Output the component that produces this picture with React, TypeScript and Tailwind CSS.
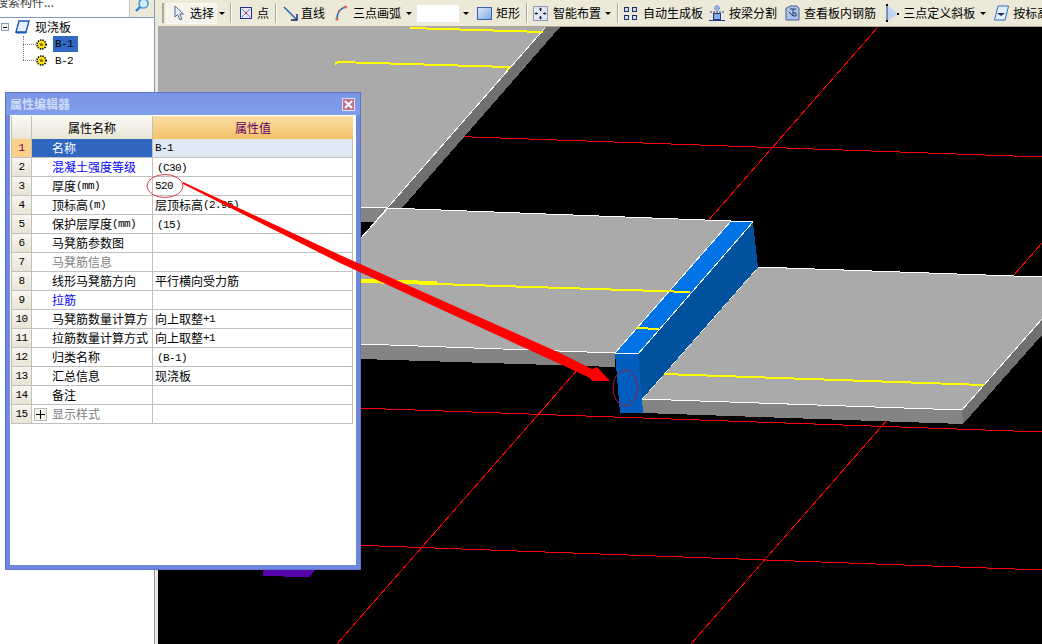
import type { ReactNode } from 'react';

const cjk = 'font-["Noto_Sans_CJK_SC","Liberation_Sans",sans-serif]';

// latin text in the old bitmap font is 6px per char
function L({ children }: { children: ReactNode }) {
  return <span className='font-["Liberation_Mono",monospace] text-[11px] tracking-[-0.6px]'>{children}</span>;
}

function Sep() {
  return <div className="w-[2px] h-[20px] bg-[#aca899] border-r border-white shrink-0" />;
}

function Caret() {
  return <div className="w-0 h-0 border-x-[3px] border-x-transparent border-t-[3px] border-t-black shrink-0" />;
}

function Tool({ icon, label, className }: { icon: ReactNode; label: string; className: string }) {
  return (
    <div className={`flex items-center shrink-0 ${className}`}>
      {icon}
      <span className="whitespace-nowrap">{label}</span>
    </div>
  );
}

function SelectIcon() {
  return (
    <svg width="10" height="16" viewBox="0 0 10 16" className="mr-[6px]">
      <path d="M1 1 V12 L3.5 9.5 L6 15 L8 14 L5.8 9 H9.5 Z" fill="#e6ecf8" stroke="#56688f" />
    </svg>
  );
}

function PointIcon() {
  return (
    <svg width="12" height="12" viewBox="0 0 12 12" className="mr-[5px]">
      <rect x="0.5" y="0.5" width="11" height="11" fill="#e4e8f6" stroke="#23308a" />
      <path d="M2 2 L10 10 M10 2 L2 10" stroke="#6878b8" />
      <rect x="5" y="5" width="2" height="2" fill="#e02828" />
    </svg>
  );
}

function LineIcon() {
  return (
    <svg width="15" height="15" viewBox="0 0 15 15" className="mr-[3px]">
      <path d="M1 1 L13 13" stroke="#1f5fb0" strokeWidth="1.4" />
      <path d="M8 14 H14 V8" stroke="#102060" strokeWidth="1.4" fill="none" />
    </svg>
  );
}

function ArcIcon() {
  return (
    <svg width="14" height="16" viewBox="0 0 14 16" className="mr-[5px]">
      <path d="M3 14 Q3 5 11 2" stroke="#2b6fc0" strokeWidth="1.6" fill="none" />
      <circle cx="3" cy="14" r="1.6" fill="#e0633a" />
      <circle cx="11.5" cy="2" r="1.6" fill="#e0633a" />
      <circle cx="5" cy="6" r="1.2" fill="#e0633a" />
    </svg>
  );
}

function RectIcon() {
  return (
    <svg width="15" height="13" viewBox="0 0 15 13" className="mr-[4px]">
      <defs>
        <linearGradient id="rectFill" x1="0" y1="0" x2="1" y2="1">
          <stop offset="0" stopColor="#dce9fa" />
          <stop offset="1" stopColor="#7ea8e4" />
        </linearGradient>
      </defs>
      <rect x="0.5" y="0.5" width="14" height="12" fill="url(#rectFill)" stroke="#3c62b4" />
    </svg>
  );
}

function SmartIcon() {
  return (
    <svg width="15" height="15" viewBox="0 0 15 15" className="mr-[5px]">
      <rect x="0.5" y="0.5" width="14" height="14" fill="#dfe6f4" stroke="#3a4a78" strokeDasharray="1 1" />
      <path d="M7.5 2 V5 M7.5 10 V13 M2 7.5 H5 M10 7.5 H13" stroke="#101828" strokeWidth="1.2" />
      <path d="M6 3.5 L7.5 1.5 L9 3.5 Z M6 11.5 L7.5 13.5 L9 11.5 Z M3.5 6 L1.5 7.5 L3.5 9 Z M11.5 6 L13.5 7.5 L11.5 9 Z" fill="#101828" />
    </svg>
  );
}

function AutoIcon() {
  return (
    <svg width="13" height="15" viewBox="0 0 13 15" className="mr-[6px]">
      {[0, 8].map((x) =>
        [1, 9].map((y) => (
          <rect key={`${x}-${y}`} x={x + 0.5} y={y + 0.5} width="4" height="4" fill="#cfe0f6" stroke="#1f2f70" />
        )),
      )}
    </svg>
  );
}

function SplitIcon() {
  return (
    <svg width="16" height="16" viewBox="0 0 16 16" className="mr-[4px]">
      <circle cx="8" cy="3" r="2.4" fill="#8fb8ee" stroke="#3c68c0" strokeDasharray="1 1" />
      <path d="M1 7 H15" stroke="#26368a" strokeDasharray="2 1" />
      <rect x="4.5" y="8.5" width="7" height="6" fill="#7fb0ec" stroke="#26368a" />
      <path d="M0 15.5 H16" stroke="#26368a" />
    </svg>
  );
}

function ViewIcon() {
  return (
    <svg width="15" height="16" viewBox="0 0 15 16" className="mr-[4px]">
      <path d="M2 3 L5 1 H12 L14 3 V15 H1 V3 Z" fill="#a9c4ea" stroke="#48608e" />
      <path d="M5 4 H11 M8 4 V11 M8 11 L4 7 M8 8 H11 V11 H8" stroke="#2a3a60" fill="none" />
    </svg>
  );
}

function SlopeIcon() {
  return (
    <svg width="13" height="18" viewBox="0 0 13 18" className="mr-[4px]">
      <path d="M1 1 V17 L12 10 Z" fill="#bcd6f4" />
      <path d="M1 1 V17" stroke="#20408a" />
      <rect x="0" y="0" width="2" height="2" fill="#000" />
      <rect x="0" y="16" width="2" height="2" fill="#000" />
      <rect x="11" y="9" width="2" height="2" fill="#000" />
    </svg>
  );
}

function LevelIcon() {
  return (
    <svg width="15" height="16" viewBox="0 0 15 16" className="mr-[4px]">
      <path d="M4 1 H14.5 L11 15 H0.5 Z" fill="#e2edfa" stroke="#2c6cc4" />
      <path d="M3 8 H11 L7 11 Z" fill="#1c2c60" />
    </svg>
  );
}

function Gear() {
  return (
    <svg width="11" height="11" viewBox="0 0 11 11" className="shrink-0">
      <circle cx="5.5" cy="5.5" r="4.5" fill="#ffe600" stroke="#000" strokeWidth="1.6" strokeDasharray="1.4 1" />
      <circle cx="5.5" cy="5.5" r="1.6" fill="#7a6a00" />
    </svg>
  );
}

function Toolbar() {
  return (
    <div className="h-[27px] shrink-0 flex items-center bg-[#ece9d8] border-b border-[#aca899] overflow-hidden">
      <div className="ml-[4px] w-[2px] h-[20px] bg-[#aca899] shrink-0" />
      <div className="ml-[2px] w-[51px] h-[21px] flex items-center pl-[7px] shrink-0 bg-[#f5f4ec] border border-[#fbfaf6]">
        <SelectIcon />
        <span>选择</span>
      </div>
      <div className="ml-[2px]"><Caret /></div>
      <div className="ml-[5px]"><Sep /></div>
      <Tool className="ml-[8px]" icon={<PointIcon />} label="点" />
      <div className="ml-[6px]"><Sep /></div>
      <Tool className="ml-[6px]" icon={<LineIcon />} label="直线" />
      <Tool className="ml-[9px]" icon={<ArcIcon />} label="三点画弧" />
      <div className="ml-[5px]"><Caret /></div>
      <div className="ml-[5px] w-[55px] h-[17px] bg-white flex items-center justify-end shrink-0">
        <div className="w-[13px] h-[17px] bg-[#ece9d8] flex items-center justify-center"><Caret /></div>
      </div>
      <Tool className="ml-[5px]" icon={<RectIcon />} label="矩形" />
      <div className="ml-[6px]"><Sep /></div>
      <Tool className="ml-[5px]" icon={<SmartIcon />} label="智能布置" />
      <div className="ml-[4px]"><Caret /></div>
      <div className="ml-[6px]"><Sep /></div>
      <Tool className="ml-[5px]" icon={<AutoIcon />} label="自动生成板" />
      <Tool className="ml-[6px]" icon={<SplitIcon />} label="按梁分割" />
      <Tool className="ml-[8px]" icon={<ViewIcon />} label="查看板内钢筋" />
      <Tool className="ml-[10px]" icon={<SlopeIcon />} label="三点定义斜板" />
      <div className="ml-[5px]"><Caret /></div>
      <Tool className="ml-[8px]" icon={<LevelIcon />} label="按标高" />
    </div>
  );
}

function Scene() {
  return (
    <svg viewBox="158 27 884 617" className="block w-full h-full bg-black" shapeRendering="crispEdges">
      {/* axis grid */}
      <g stroke="#ff0000" fill="none">
        <path d="M158 126 L1042 157" />
        <path d="M158 401 L1042 432" />
        <path d="M158 538 L1042 570" />
        <path d="M878 27 L337 644" />
        <path d="M1042 243 L691 644" />
      </g>

      {/* top slab */}
      <polygon points="158,215 375,222 402,208 388,208 158,200" fill="#848484" />
      <polygon points="546,27 560,27 402,208 388,208" fill="#707070" />
      <polygon points="158,27 546,27 388,208 158,200" fill="#aaaaaa" />
      <path d="M545 28 L361 238" stroke="#ffffff" />
      <path d="M158 200 L388 208" stroke="#ffffff" />
      <polyline points="410,28 543,32" stroke="#ffff00" fill="none" strokeWidth="2" />
      <polyline points="335,64 338,62 509,67 507,71" stroke="#ffff00" fill="none" strokeWidth="2" />

      {/* middle slab */}
      <polygon points="361,344 615,353 615,367 361,359" fill="#848484" />
      <polygon points="388,208 731,221 615,353 361,344 361,238" fill="#aaaaaa" />
      <path d="M361 238 L388 208 L731 221" stroke="#ffffff" fill="none" />
      <path d="M361 344 L615 353" stroke="#ffffff" />
      <path d="M361 281 L437 283" stroke="#ffff00" strokeWidth="4" />
      <path d="M437 284 L690 292" stroke="#ffff00" strokeWidth="2" />

      {/* right slab */}
      <polygon points="642,399 962,410 963,424 643,413" fill="#848484" />
      <polygon points="962,410 1042,319 1042,335 963,424" fill="#707070" />
      <polygon points="758,267 1042,277 1042,319 962,410 642,399" fill="#aaaaaa" />
      <path d="M642 399 L758 267 L1042 277 M642 399 L962 410 L1042 319" stroke="#ffffff" fill="none" />
      <path d="M663 374 L984 385" stroke="#ffff00" strokeWidth="2" />

      {/* beam */}
      <polygon points="753,222 758,267 642,399 643,413 638,354" fill="#00519e" />
      <polygon points="615,353 638,354 643,413 620,413" fill="#005fbe" />
      <polygon points="731,221 753,222 638,354 615,353" fill="#0073e6" />
      <path d="M731 221 L753 222 L638 354 L615 353 Z" stroke="#ffffff" fill="none" />
      <path d="M658 291 L690 292" stroke="#ffff00" strokeWidth="2" />
      <path d="M636 328 L659 329" stroke="#ffff00" strokeWidth="2" />

      {/* bit of another member under the dialog */}
      <polygon points="263,570 315,570 310,577 284,577 284,576 263,576" fill="#5500aa" />
    </svg>
  );
}

const rows: { name: ReactNode; value?: ReactNode; tone?: string }[] = [
  { name: '名称', value: <L>B-1</L> },
  { name: '混凝土强度等级', value: <span className="pl-[2px]"><L>(C30)</L></span>, tone: 'text-[#0000ff]' },
  { name: <>厚度<L>(mm)</L></>, value: <L>520</L> },
  { name: <>顶标高<L>(m)</L></>, value: <>层顶标高<L>(2.95)</L></> },
  { name: <>保护层厚度<L>(mm)</L></>, value: <span className="pl-[2px]"><L>(15)</L></span> },
  { name: '马凳筋参数图' },
  { name: '马凳筋信息', tone: 'text-[#808080]' },
  { name: '线形马凳筋方向', value: '平行横向受力筋' },
  { name: '拉筋', tone: 'text-[#0000ff]' },
  { name: '马凳筋数量计算方', value: <>向上取整<L>+1</L></> },
  { name: '拉筋数量计算方式', value: <>向上取整<L>+1</L></> },
  { name: '归类名称', value: <span className="pl-[2px]"><L>(B-1)</L></span> },
  { name: '汇总信息', value: '现浇板' },
  { name: '备注' },
  { name: '显示样式', tone: 'text-[#808080]' },
];

function PropertyDialog() {
  return (
    <div className="absolute left-[5px] top-[92px] w-[356px] h-[478px] flex flex-col bg-[#7088dc] border border-[#5f74cf] px-[4px] pb-[4px]">
      <div className="h-[22px] shrink-0 flex items-center justify-between bg-gradient-to-b from-[#7b95e4] to-[#7f9ee8] -mx-[4px] px-[4px]">
        <span className="font-bold text-[#cfdcf8] text-[12px]">属性编辑器</span>
        <div className="w-[13px] h-[13px] mr-[1px] flex items-center justify-center bg-[#c0708c] border border-[#dfe4f8]">
          <svg width="9" height="9" viewBox="0 0 9 9">
            <path d="M1 1 L8 8 M8 1 L1 8" stroke="#ffffff" strokeWidth="2" />
          </svg>
        </div>
      </div>
      <div className="flex-1 bg-white pl-[1px] pt-[1px]">
        <div className="grid grid-cols-[20px_121px_200px] grid-rows-[23px_repeat(15,19px)] w-[342px] border-l border-[#c0c0c0]">
          <div className="bg-gradient-to-b from-[#fbfaf5] to-[#e9e6d6] border-r border-[#c0c0c0]" />
          <div className="flex items-center justify-center bg-gradient-to-b from-[#fbfaf5] to-[#e9e6d6] border-r border-[#c0c0c0]">属性名称</div>
          <div className="flex items-center justify-center bg-gradient-to-b from-[#fbdfa6] to-[#f3c268] text-[#660066]">属性值</div>
          {rows.map((row, i) => (
            <div key={i} className="contents">
              <div
                className={`flex items-center justify-center border-r border-b border-[#c0c0c0] ${
                  i === 0 ? 'bg-[#fdd08a] text-[#660066]' : 'bg-gradient-to-b from-[#f8f6ee] to-[#e8e5d5]'
                }`}
              >
                <L>{i + 1}</L>
              </div>
              <div
                className={`relative flex items-center pl-[20px] border-r border-b border-[#c0c0c0] overflow-hidden whitespace-nowrap ${
                  i === 0 ? 'bg-[#2f66c0] text-white' : row.tone ?? 'text-black'
                }`}
              >
                {i === 14 && (
                  <div className="absolute left-[2px] top-[3px] w-[13px] h-[13px] bg-[#f4f3ec] border border-[#b8b8b8] flex items-center justify-center">
                    <svg width="9" height="9" viewBox="0 0 9 9" shapeRendering="crispEdges">
                      <path d="M0 4.5 H9 M4.5 0 V9" stroke="#000000" />
                    </svg>
                  </div>
                )}
                {row.name}
              </div>
              <div
                className={`flex items-center pl-[2px] border-r border-b border-[#c0c0c0] whitespace-nowrap overflow-hidden ${
                  i === 0 ? 'bg-[#dfe8f5]' : 'bg-white'
                }`}
              >
                {row.value}
              </div>
            </div>
          ))}
        </div>
      </div>
    </div>
  );
}

function TreePanel() {
  return (
    <aside className="w-[155px] shrink-0 flex flex-col bg-white border-r border-[#7f9db9]">
      <div className="h-[18px] shrink-0 flex bg-[#ece9d8] border-b border-[#7f9db9]">
        <div className="w-[130px] bg-white overflow-hidden border-r border-[#c8c8c8]">
          <div className="-mt-[4px] -ml-[4px] whitespace-nowrap text-[#404040]">搜索构件...</div>
        </div>
        <div className="flex-1 flex justify-center">
          <svg width="16" height="13" viewBox="0 0 16 13">
            <circle cx="9.5" cy="3.5" r="4.5" fill="#d6ecfb" stroke="#4a9be0" strokeWidth="1.6" />
            <path d="M6 7 L2 11" stroke="#2f7fd0" strokeWidth="2.4" />
          </svg>
        </div>
      </div>
      <div className="relative flex-1 pl-[1px]">
        <div className="h-[18px] flex items-center">
          <div className="w-[8px] h-[8px] border border-[#7f9db9] bg-[#f4f3ec] flex items-center justify-center">
            <div className="w-[4px] h-[1px] bg-black" />
          </div>
          <svg width="15" height="14" viewBox="0 0 15 14" className="ml-[6px]">
            <path d="M4 1 H14 L11 12 H1 Z" fill="#e8f1fc" stroke="#1c58b8" strokeWidth="1.4" />
            <path d="M1 12 L1 13 H11 L11 12" fill="#1c58b8" stroke="#1c58b8" />
          </svg>
          <span className="ml-[5px]">现浇板</span>
        </div>
        <div className="absolute left-[23px] top-[18px] h-[24px] w-[12px] border-l border-dotted border-[#808080]" />
        <div className="ml-[22px] flex flex-col">
          <div className="h-[16px] flex items-center">
            <div className="w-[13px] border-t border-dotted border-[#808080]" />
            <Gear />
            <span className="ml-[6px] w-[25px] h-[16px] flex items-center pl-[2px] bg-[#316ac5]"><L>B-1</L></span>
          </div>
          <div className="h-[16px] flex items-center">
            <div className="w-[13px] border-t border-dotted border-[#808080]" />
            <Gear />
            <span className="ml-[6px] pl-[2px]"><L>B-2</L></span>
          </div>
        </div>
      </div>
    </aside>
  );
}

export default function App() {
  return (
    <div className={`relative w-[1042px] h-[644px] overflow-hidden flex text-[12px] leading-none text-black bg-[#ece9d8] ${cjk}`}>
      <TreePanel />
      <div className="w-[3px] shrink-0 bg-[#ece9d8]" />
      <main className="flex-1 min-w-0 flex flex-col">
        <Toolbar />
        <div className="flex-1 min-h-0">
          <Scene />
        </div>
      </main>

      <PropertyDialog />

      {/* hand-drawn markup on top of the screenshot */}
      <svg className="absolute inset-0 pointer-events-none" width="1042" height="644" viewBox="0 0 1042 644">
        <ellipse cx="165" cy="186" rx="18" ry="11.5" fill="none" stroke="#d8404c" />
        <polygon points="183,182 340,255 560,353 592,369 597,367 610,381 592,381 590,378 560,364 340,263 183,184" fill="#ff0000" />
        <ellipse cx="625.5" cy="388" rx="12.5" ry="18" fill="none" stroke="#a81830" />
      </svg>
    </div>
  );
}
